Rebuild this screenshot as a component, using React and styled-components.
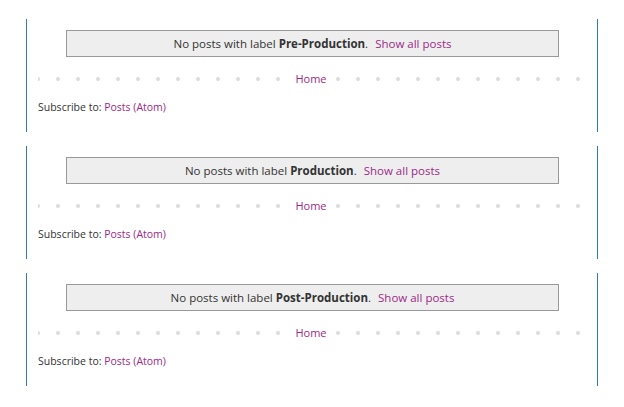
import React from 'react';
import styled, { createGlobalStyle } from 'styled-components';

const GlobalStyle = createGlobalStyle`
  body {
    margin: 0;
    background: #fff;
    font-family: "Open Sans", "Noto Sans", sans-serif;
    color: #333;
  }
`;

const Page = styled.div`
  padding: 19px 0 0 26px;
  display: flex;
  flex-direction: column;
  gap: 14px;
`;

const Section = styled.div`
  width: 572px;
  box-sizing: border-box;
  border-left: 1px solid #2e7bb0;
  border-right: 1px solid #2e7bb0;
  padding: 11px 13px 18px 11px;
  display: flex;
  flex-direction: column;
`;

const StatusBox = styled.div`
  width: 493px;
  height: 27px;
  box-sizing: border-box;
  margin-left: 28px;
  background: #eee;
  border: 1px solid #999;
  display: flex;
  align-items: center;
  justify-content: center;
  font-size: 11.5px;
  color: #333;
`;

const Link = styled.a`
  color: #9c2a87;
  text-decoration: none;
  cursor: pointer;
`;

const ShowAll = styled(Link)`
  margin-left: 7px;
`;

const Pager = styled.div`
  margin-top: 12px;
  height: 20px;
  display: flex;
  align-items: center;
  justify-content: center;
  background-image: radial-gradient(circle at 10px 50%, #dedede 1.6px, transparent 2.4px);
  background-size: 20px 20px;
  background-position: -10px center;
  background-repeat: repeat-x;
`;

const HomeLink = styled(Link)`
  background: #fff;
  padding: 0 9px;
  font-size: 11px;
  line-height: 20px;
`;

const Feeds = styled.div`
  margin-top: 11px;
  font-size: 10.5px;
  line-height: 14px;
  color: #333;
`;

const labels = ['Pre-Production', 'Production', 'Post-Production'];

export default function App() {
  return (
    <>
      <GlobalStyle />
      <Page>
        {labels.map((label) => (
          <Section key={label}>
            <StatusBox>
              <span>
                No posts with label <b>{label}</b>.<ShowAll>Show all posts</ShowAll>
              </span>
            </StatusBox>
            <Pager>
              <HomeLink>Home</HomeLink>
            </Pager>
            <Feeds>
              Subscribe to: <Link>Posts (Atom)</Link>
            </Feeds>
          </Section>
        ))}
      </Page>
    </>
  );
}
